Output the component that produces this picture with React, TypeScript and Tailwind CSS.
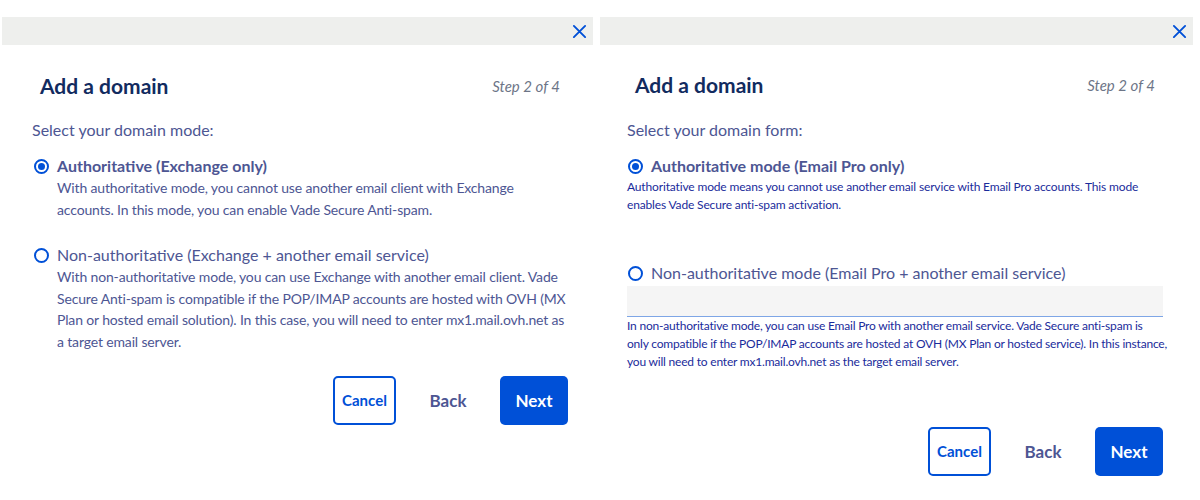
import React from "react";

const font = { fontFamily: "Lato, 'Noto Sans', sans-serif" };

function CloseIcon() {
  return (
    <svg width="15" height="15" viewBox="0 0 16 16" fill="none">
      <path d="M2 2L14 14M14 2L2 14" stroke="#0050d7" strokeWidth="2" strokeLinecap="round" />
    </svg>
  );
}

function Radio({ checked }: { checked: boolean }) {
  return (
    <span className="flex h-[15px] w-[15px] shrink-0 items-center justify-center rounded-full border-2 border-[#0050d7] bg-white">
      {checked && <span className="h-[7px] w-[7px] rounded-full bg-[#0050d7]" />}
    </span>
  );
}

function Buttons() {
  return (
    <div className="flex items-center justify-end gap-[31px]">
      <button className="h-[49px] w-[63px] rounded-[5px] border-2 border-[#0050d7] bg-white text-[15px] font-bold text-[#0050d7]">
        Cancel
      </button>
      <button className="h-[49px] w-[42px] text-[17px] font-bold text-[#4d5693]">Back</button>
      <button className="h-[49px] w-[68px] rounded-[5px] bg-[#0050d7] text-[17px] font-bold text-white">Next</button>
    </div>
  );
}

function Bar() {
  return (
    <div className="flex h-[28px] items-center justify-end bg-[#eeefed] pr-[6px]">
      <CloseIcon />
    </div>
  );
}

export default function App() {
  return (
    <div className="flex h-[500px] w-[1200px] gap-[7px] bg-white px-[2px] pt-[17px]" style={font}>
      {/* Left panel */}
      <div className="w-[591px]">
        <Bar />
        <div className="mt-[27px] flex h-[28px] items-center justify-between pl-[38px] pr-[33px]">
          <h2 className="text-[21px] font-bold text-[#122b5f]">Add a domain</h2>
          <span className="text-[15px] italic text-[#6d7587]">Step 2 of 4</span>
        </div>
        <div className="pl-[30px] pr-[25px]">
          <p className="mt-[18px] text-[16px] leading-[24px] text-[#4d5693]">Select your domain mode:</p>
          <div className="mt-[13px] flex h-[22px] items-center gap-[8px] pl-[2px]">
            <Radio checked />
            <span className="text-[16px] font-bold text-[#4d5693]">Authoritative (Exchange only)</span>
          </div>
          <p className="pl-[25px] text-[14px] leading-[22px] tracking-[-0.15px] text-[#4d5693]">
            With authoritative mode, you cannot use another email client with Exchange accounts. In this mode, you can
            enable Vade Secure Anti-spam.
          </p>
          <div className="mt-[23px] flex h-[22px] items-center gap-[8px] pl-[2px]">
            <Radio checked={false} />
            <span className="text-[16px] text-[#4d5693]">Non-authoritative (Exchange + another email service)</span>
          </div>
          <p className="pl-[25px] text-[14px] leading-[21.5px] tracking-[-0.15px] text-[#4d5693]">
            With non-authoritative mode, you can use Exchange with another email client. Vade Secure Anti-spam is
            compatible if the POP/IMAP accounts are hosted with OVH (MX Plan or hosted email solution). In this case,
            you will need to enter mx1.mail.ovh.net as a target email server.
          </p>
          <div className="mt-[24px]">
            <Buttons />
          </div>
        </div>
      </div>

      {/* Right panel */}
      <div className="w-[593px]">
        <Bar />
        <div className="mt-[26px] flex h-[28px] items-center justify-between pl-[35px] pr-[38px]">
          <h2 className="text-[21px] font-bold text-[#122b5f]">Add a domain</h2>
          <span className="text-[15px] italic text-[#6d7587]">Step 2 of 4</span>
        </div>
        <div className="pl-[27px] pr-[30px]">
          <p className="mt-[19px] text-[16px] leading-[24px] text-[#4d5693]">Select your domain form:</p>
          <div className="mt-[13px] flex h-[22px] items-center gap-[8px] pl-[1px]">
            <Radio checked />
            <span className="text-[16px] font-bold text-[#4d5693]">Authoritative mode (Email Pro only)</span>
          </div>
          <p className="mt-[1px] text-[12px] leading-[18px] tracking-[-0.15px] text-[#1a2b9b]">
            Authoritative mode means you cannot use another email service with Email Pro accounts. This mode enables
            Vade Secure anti-spam activation.
          </p>
          <div className="mt-[48px] flex h-[22px] items-center gap-[8px] pl-[1px]">
            <Radio checked={false} />
            <span className="text-[16px] text-[#4d5693]">Non-authoritative mode (Email Pro + another email service)</span>
          </div>
          <div className="mt-[2px] h-[31px] border-b border-[#7ea6e6] bg-[#f5f5f5]" />
          <p className="mr-[-20px] text-[12px] leading-[18px] tracking-[-0.2px] text-[#1a2b9b]">
            In non-authoritative mode, you can use Email Pro with another email service. Vade Secure anti-spam is
            <br />
            only compatible if the POP/IMAP accounts are hosted at OVH (MX Plan or hosted service). In this instance,
            <br />
            you will need to enter mx1.mail.ovh.net as the target email server.
          </p>
          <div className="mt-[56px]">
            <Buttons />
          </div>
        </div>
      </div>
    </div>
  );
}
